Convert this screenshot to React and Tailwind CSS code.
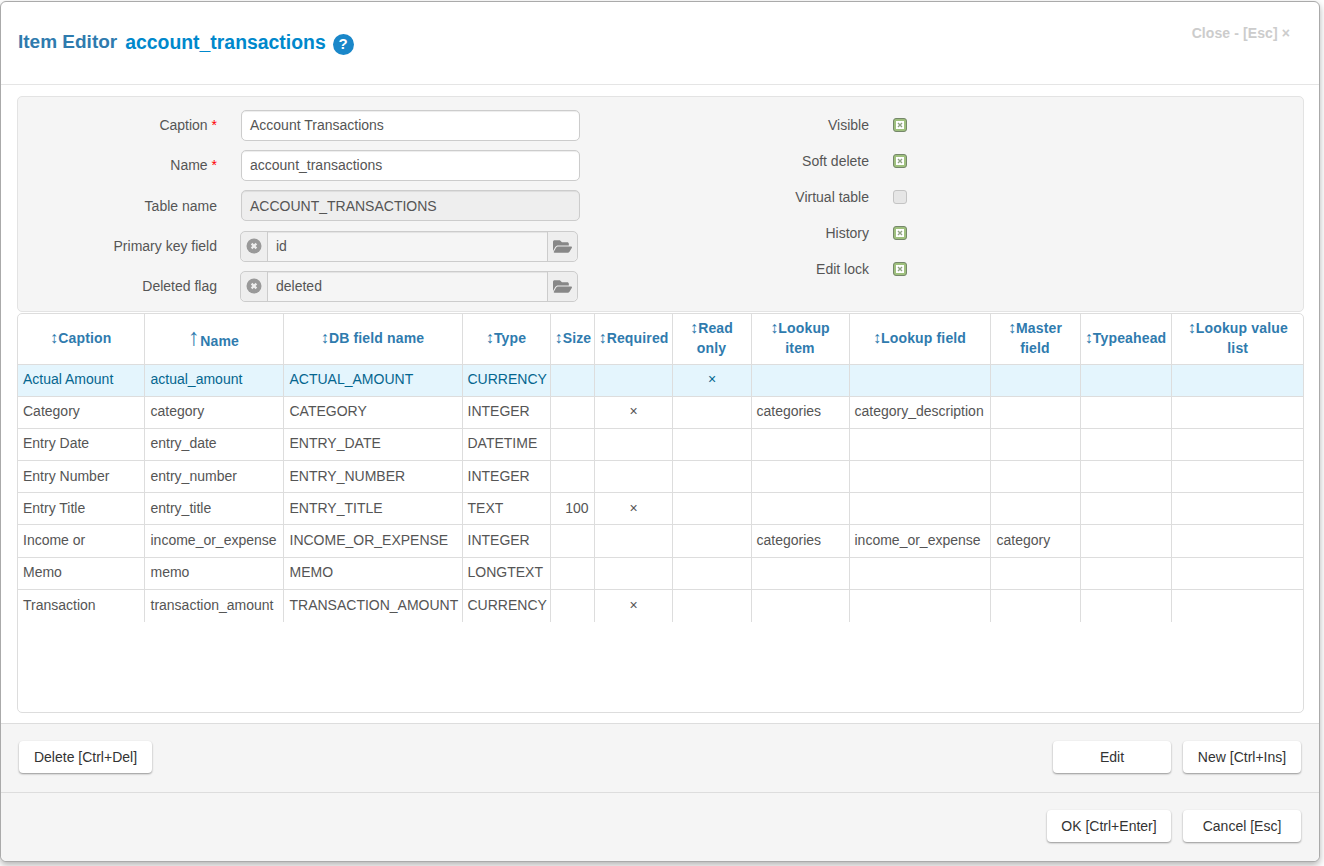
import React from 'react';
import { FaFolderOpen } from 'react-icons/fa';

const columns = [
  { title: 'Caption', width: 126 },
  { title: 'Name', width: 139, sorted: true },
  { title: 'DB field name', width: 179 },
  { title: 'Type', width: 88 },
  { title: 'Size', width: 44 },
  { title: 'Required', width: 78 },
  { title: 'Read\nonly', width: 79 },
  { title: 'Lookup\nitem', width: 98 },
  { title: 'Lookup field', width: 141 },
  { title: 'Master\nfield', width: 90 },
  { title: 'Typeahead', width: 91 },
  { title: 'Lookup value\nlist', width: 133 },
];

const rows = [
  ['Actual Amount', 'actual_amount', 'ACTUAL_AMOUNT', 'CURRENCY', '', '', '×', '', '', '', '', ''],
  ['Category', 'category', 'CATEGORY', 'INTEGER', '', '×', '', 'categories', 'category_description', '', '', ''],
  ['Entry Date', 'entry_date', 'ENTRY_DATE', 'DATETIME', '', '', '', '', '', '', '', ''],
  ['Entry Number', 'entry_number', 'ENTRY_NUMBER', 'INTEGER', '', '', '', '', '', '', '', ''],
  ['Entry Title', 'entry_title', 'ENTRY_TITLE', 'TEXT', '100', '×', '', '', '', '', '', ''],
  ['Income or', 'income_or_expense', 'INCOME_OR_EXPENSE', 'INTEGER', '', '', '', 'categories', 'income_or_expense', 'category', '', ''],
  ['Memo', 'memo', 'MEMO', 'LONGTEXT', '', '', '', '', '', '', '', ''],
  ['Transaction', 'transaction_amount', 'TRANSACTION_AMOUNT', 'CURRENCY', '', '×', '', '', '', '', '', ''],
];

const checks = [
  ['Visible', true],
  ['Soft delete', true],
  ['Virtual table', false],
  ['History', true],
  ['Edit lock', true],
];

const FormLabel = ({ text, required }) => (
  <label className="w-[199px] shrink-0 text-right">
    {text}
    {required && <span className="text-[#f00]"> *</span>}
  </label>
);

const TextRow = ({ label, value, required, disabled }) => (
  <div className="flex h-[40.33px] items-center">
    <FormLabel text={label} required={required} />
    <div
      className={`ml-[24px] flex h-[31px] w-[339px] items-center rounded-[5px] border border-[#ccc] px-[8px] shadow-[inset_0_1px_1px_rgba(0,0,0,0.075)] ${
        disabled ? 'bg-[#eee]' : 'bg-white'
      }`}
    >
      {value}
    </div>
  </div>
);

const LookupRow = ({ label, value }) => (
  <div className="flex h-[40.33px] items-center">
    <FormLabel text={label} />
    <div className="ml-[23px] flex h-[31px] w-[338px] items-stretch rounded-[5px] border border-[#ccc] bg-[#f5f5f5] shadow-[inset_0_1px_1px_rgba(0,0,0,0.075)]">
      <span className="flex w-[27px] items-center justify-center rounded-l-[5px] border-r border-[#ccc] bg-[#eee]">
        <svg viewBox="0 0 16 16" className="h-[16px] w-[16px]">
          <circle cx="8" cy="8" r="7.5" fill="#999" />
          <path d="M5.6 5.6l4.8 4.8M10.4 5.6l-4.8 4.8" stroke="#eee" strokeWidth="2.2" />
        </svg>
      </span>
      <span className="flex flex-1 items-center pl-[8px]">{value}</span>
      <span className="flex w-[30px] items-center justify-center rounded-r-[5px] border-l border-[#ccc] bg-[#eee]">
        <FaFolderOpen className="text-[19px] text-[#888]" />
      </span>
    </div>
  </div>
);

const CheckRow = ({ label, checked }) => (
  <div className="flex h-[36px] items-center">
    <label className="w-[251px] shrink-0 text-right">{label}</label>
    <span
      className={`ml-[24px] flex h-[14px] w-[14px] items-center justify-center rounded-[3px] ${
        checked ? 'border-[1.5px] border-[#75876a] bg-[#9fc07e]' : 'border border-[#c4c4c4] bg-[#e6e6e6]'
      }`}
    >
      {checked && (
        <svg viewBox="0 0 8 8" className="h-[8px] w-[8px]">
          <rect width="8" height="8" fill="#fff" />
          <path d="M2 2l4 4M6 2L2 6" stroke="#8fa283" strokeWidth="1.4" />
        </svg>
      )}
    </span>
  </div>
);

const Button = ({ children, className = '' }) => (
  <button
    className={`flex h-[32px] items-center justify-center rounded-[4px] bg-white text-[#333] shadow-[0_1px_2px_rgba(0,0,0,0.4)] ${className}`}
  >
    {children}
  </button>
);

export default function App() {
  return (
    <div className="h-[866px] w-[1324px] overflow-hidden bg-white pt-px font-['Liberation_Sans',Arial,sans-serif] text-[14px] leading-[20px] text-[#555]">
      <div className="flex h-[861px] w-[1320px] flex-col rounded-[6px] border border-[#aaa] bg-white shadow-[0_3px_7px_rgba(0,0,0,0.3)]">
        <div className="relative flex h-[83px] shrink-0 items-center border-b border-[#e5e5e5] pb-[2px] pl-[17px]">
          <h3 className="text-[19px] font-bold text-[#2f7bae]">Item Editor</h3>
          <span className="ml-[8px] text-[19.4px] font-bold text-[#0088cc]">account_transactions</span>
          <span className="mt-[4px] ml-[7px] flex h-[21px] w-[21px] items-center justify-center rounded-full bg-[#1a87c9] text-[15px] font-bold text-white">
            ?
          </span>
          <span className="absolute top-[21px] right-[29px] text-[14px] font-bold tracking-[0.1px] text-[#ccc]">Close - [Esc] ×</span>
        </div>

        <div className="flex h-[638px] shrink-0 flex-col pt-[11px] pr-[15px] pl-[16px]">
          <div className="flex h-[216px] shrink-0 rounded-[5px] border border-[#e3e3e3] bg-[#f5f5f5] pt-[8px]">
            <div className="w-[600px] shrink-0">
              <TextRow label="Caption" value="Account Transactions" required />
              <TextRow label="Name" value="account_transactions" required />
              <TextRow label="Table name" value="ACCOUNT_TRANSACTIONS" disabled />
              <LookupRow label="Primary key field" value="id" />
              <LookupRow label="Deleted flag" value="deleted" />
            </div>
            <div className="pt-[2px]">
              {checks.map(([label, checked]) => (
                <CheckRow key={label} label={label} checked={checked} />
              ))}
            </div>
          </div>

          <div className="mt-[1px] h-[400px] shrink-0 overflow-hidden rounded-[5px] border border-[#ddd] bg-white">
            <table className="w-[1286px] table-fixed border-collapse">
              <colgroup>
                {columns.map((col) => (
                  <col key={col.title} style={{ width: col.width }} />
                ))}
              </colgroup>
              <thead>
                <tr className="h-[50px]">
                  {columns.map((col, i) => (
                    <th
                      key={col.title}
                      className={`px-[4px] pb-[1px] text-center align-middle font-bold tracking-[0.15px] whitespace-pre-line text-[#2f7bae] ${i > 0 ? 'border-l border-[#ddd]' : ''}`}
                    >
                      {col.sorted ? (
                        <span className="text-[24px] font-normal leading-[20px]">↑</span>
                      ) : (
                        <span className="text-[16px] font-normal leading-[20px]">↕</span>
                      )}
                      <span className={col.sorted ? 'relative top-[1px]' : ''}>{col.title}</span>
                    </th>
                  ))}
                </tr>
              </thead>
              <tbody>
                {rows.map((row, r) => (
                  <tr key={row[1]} className={`h-[32.2px] border-t border-[#ddd] ${r === 0 ? 'bg-[#e4f5fd] text-[#04668f]' : ''}`}>
                    {row.map((cell, i) => (
                      <td
                        key={i}
                        className={`overflow-hidden pr-[5px] pb-[2px] whitespace-nowrap ${i > 0 ? 'border-l border-[#ddd]' : ''} ${
                          i === 0 || i === 3 || i === 7 || i === 8 ? 'pl-[5px]' : 'pl-[6px]'
                        } ${i === 4 ? 'text-right' : i === 5 || i === 6 ? 'text-center' : 'text-left'}`}
                      >
                        {cell}
                      </td>
                    ))}
                  </tr>
                ))}
              </tbody>
            </table>
          </div>
        </div>

        <div className="flex h-[69px] shrink-0 items-start justify-between border-t border-[#ddd] bg-[#f5f5f5] pt-[17px] pr-[18px] pl-[18px]">
          <Button className="w-[133px]">Delete [Ctrl+Del]</Button>
          <div className="flex gap-[12px]">
            <Button className="w-[118px]">Edit</Button>
            <Button className="w-[118px]">New [Ctrl+Ins]</Button>
          </div>
        </div>

        <div className="flex flex-1 items-start justify-end gap-[12px] rounded-b-[6px] border-t border-[#ddd] bg-[#f5f5f5] pt-[17px] pr-[18px]">
          <Button className="w-[124px]">OK [Ctrl+Enter]</Button>
          <Button className="w-[118px]">Cancel [Esc]</Button>
        </div>
      </div>
    </div>
  );
}
